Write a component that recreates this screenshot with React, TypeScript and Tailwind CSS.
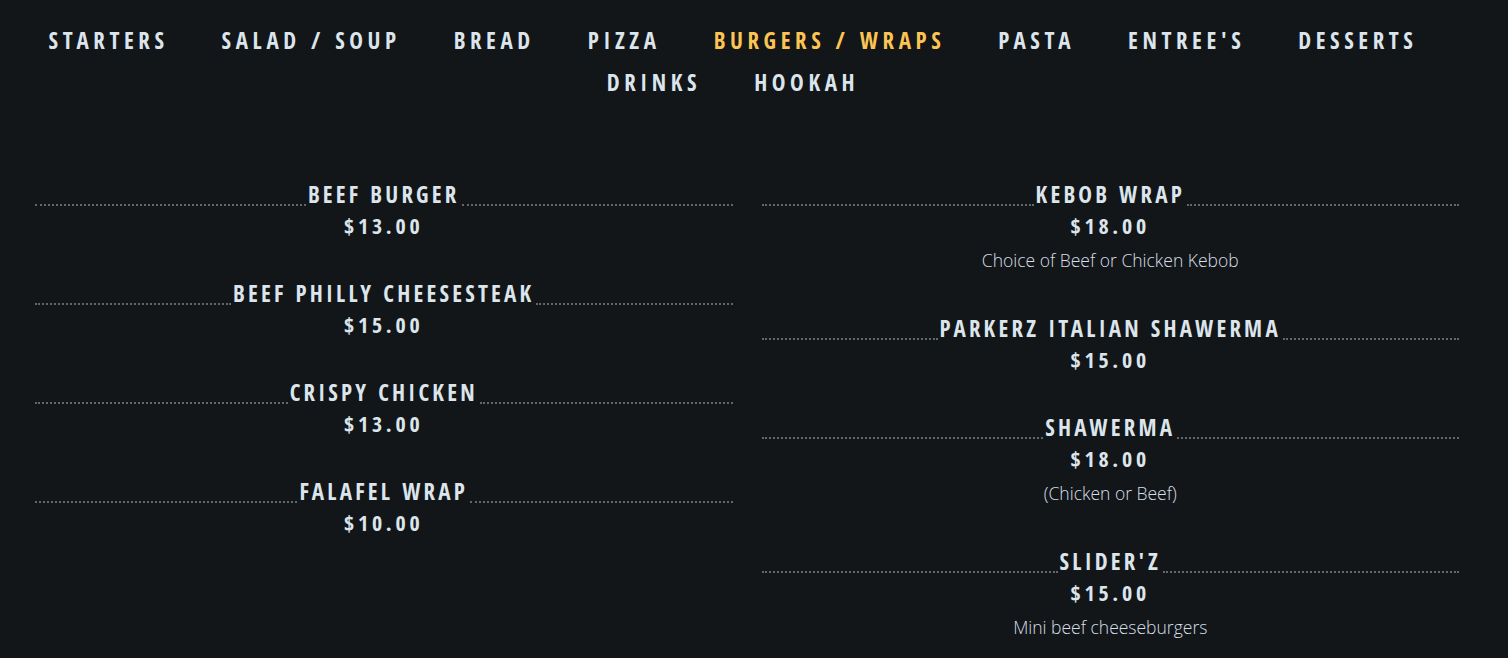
import React from "react";

type Item = { name: string; price: string; desc?: string };

const categories = [
  "STARTERS",
  "SALAD / SOUP",
  "BREAD",
  "PIZZA",
  "BURGERS / WRAPS",
  "PASTA",
  "ENTREE'S",
  "DESSERTS",
  "DRINKS",
  "HOOKAH",
];

const left: Item[] = [
  { name: "BEEF BURGER", price: "$13.00" },
  { name: "BEEF PHILLY CHEESESTEAK", price: "$15.00" },
  { name: "CRISPY CHICKEN", price: "$13.00" },
  { name: "FALAFEL WRAP", price: "$10.00" },
];

const right: Item[] = [
  { name: "KEBOB WRAP", price: "$18.00", desc: "Choice of Beef or Chicken Kebob" },
  { name: "PARKERZ ITALIAN SHAWERMA", price: "$15.00" },
  { name: "SHAWERMA", price: "$18.00", desc: "(Chicken or Beef)" },
  { name: "SLIDER'Z", price: "$15.00", desc: "Mini beef cheeseburgers" },
];

const narrow = "font-['Open_Sans_Condensed','Roboto_Condensed',sans-serif]";

function MenuItem({ item }: { item: Item }) {
  return (
    <div className="mb-[37px]">
      <div className="flex items-end h-[30px]">
        <span className="flex-1 border-b-2 border-dotted border-[#62676c] mb-[3px]" />
        <span className={`${narrow} px-[2px] text-[23px] font-bold tracking-[0.14em] leading-[30px] text-[#dce5ec]`}>
          {item.name}
        </span>
        <span className="flex-1 border-b-2 border-dotted border-[#62676c] mb-[3px]" />
      </div>
      <div className={`${narrow} h-[32px] text-center text-[22px] font-bold tracking-[0.17em] leading-[32px] text-[#dce5ec]`}>
        {item.price}
      </div>
      {item.desc && (
        <div className="h-[35px] pt-[3px] text-center font-['Open_Sans',sans-serif] font-light text-[17.5px] leading-[32px] text-[#d6dfe6]">
          {item.desc}
        </div>
      )}
    </div>
  );
}

export default function App() {
  return (
    <div className="min-h-[658px] bg-[#131619] pt-[19px]">
      <nav className="ml-[35px] w-[1396px] flex flex-wrap justify-center gap-x-[53px]">
        {categories.map((c) => (
          <a
            key={c}
            className={`${narrow} h-[42px] leading-[42px] text-[23px] font-bold tracking-[0.2em] ${
              c === "BURGERS / WRAPS" ? "text-[#fcc453]" : "text-[#dce5ec]"
            }`}
          >
            {c}
          </a>
        ))}
      </nav>
      <div className="grid grid-cols-2 gap-x-[29px] pl-[35px] pr-[49px] mt-[76px]">
        <div>
          {left.map((i) => (
            <MenuItem key={i.name} item={i} />
          ))}
        </div>
        <div>
          {right.map((i) => (
            <MenuItem key={i.name} item={i} />
          ))}
        </div>
      </div>
    </div>
  );
}
